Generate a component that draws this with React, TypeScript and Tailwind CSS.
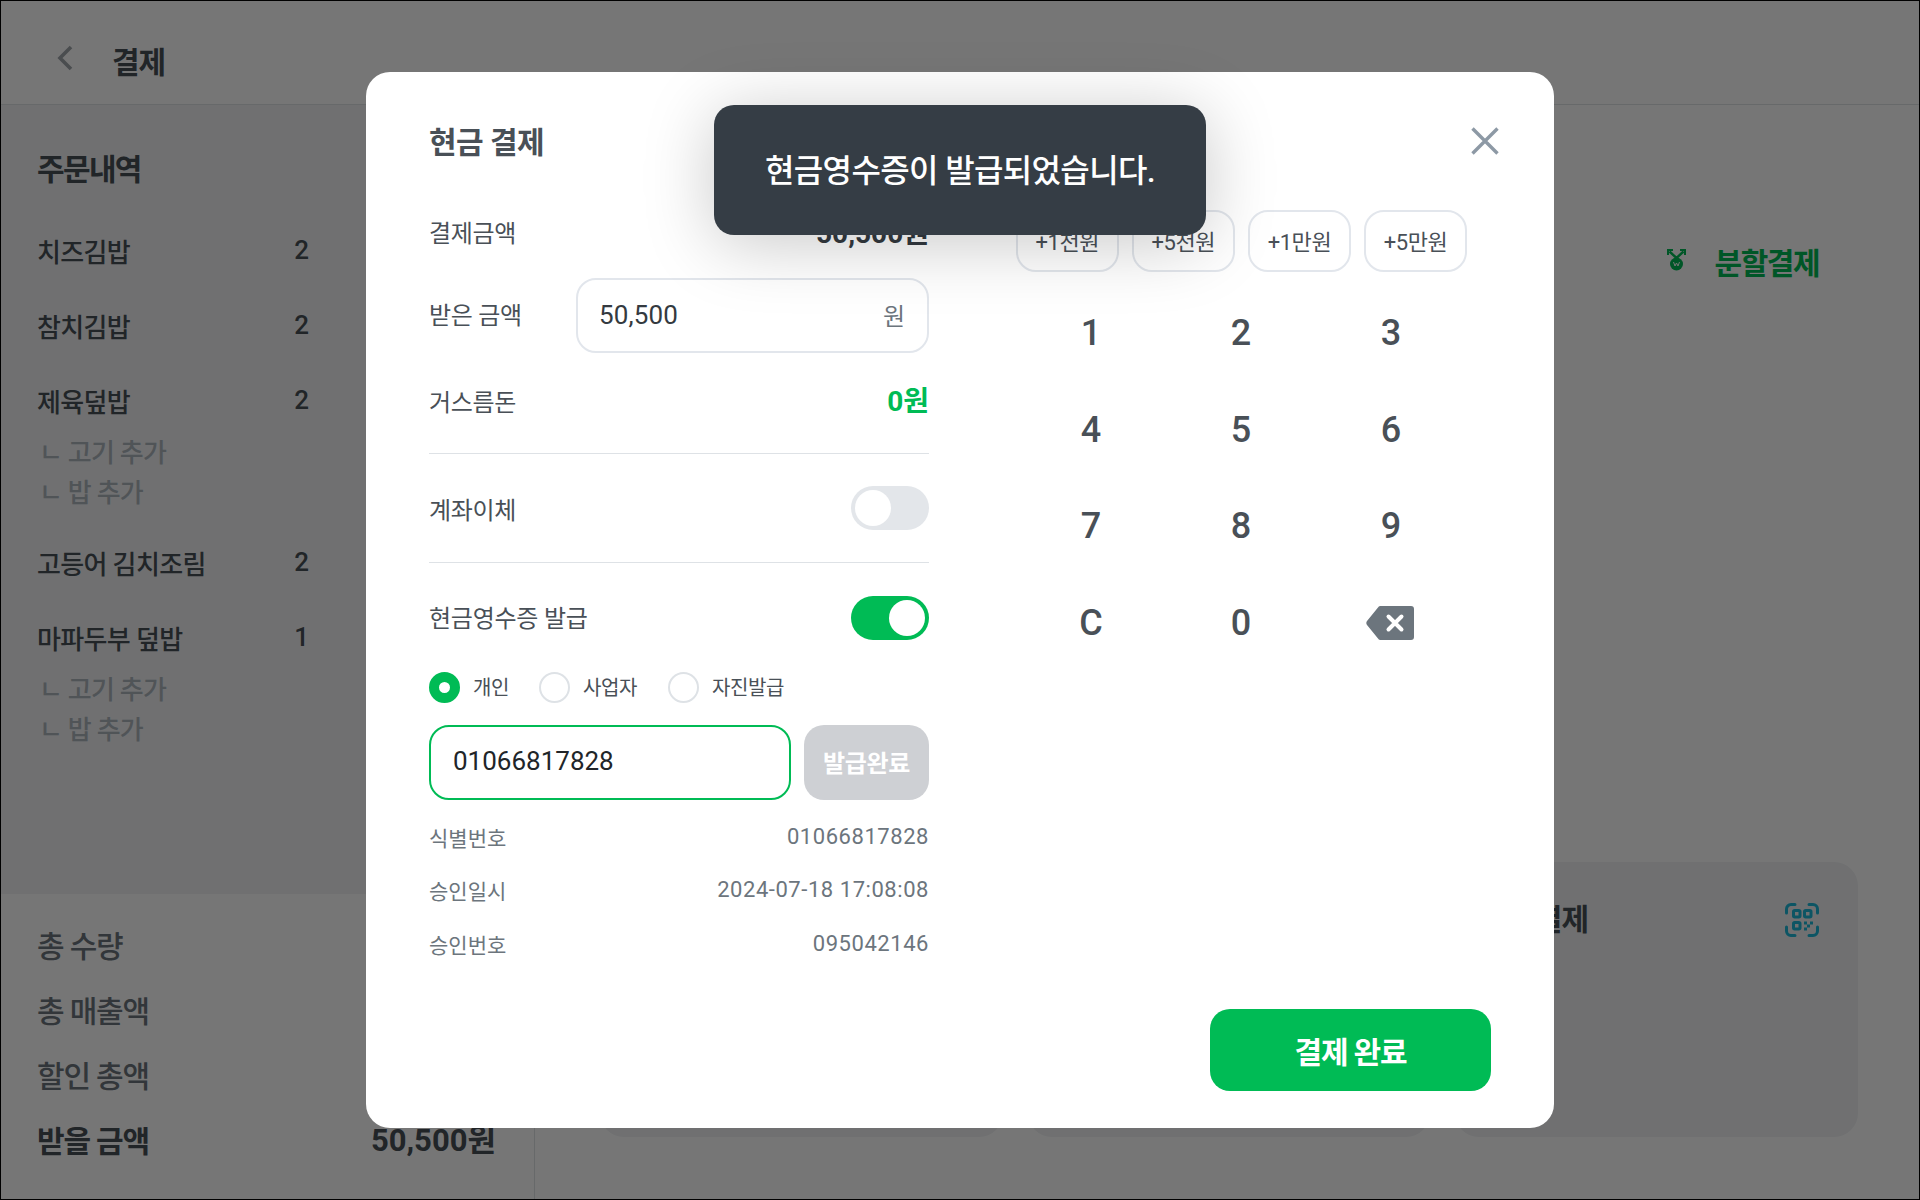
import React from "react";

const font = { fontFamily: '"Roboto","Noto Sans CJK KR",sans-serif' };

function OrderItem({ name, qty, subs, className }: { name: string; qty: number; subs?: string[]; className?: string }) {
  return (
    <div className={className}>
      <div className="flex h-[36px] w-[272px] items-center justify-between text-[26px] font-medium tracking-[-0.025em] text-[#495057]">
        <span>{name}</span>
        <span className="-mt-[5px] tracking-normal">{qty}</span>
      </div>
      {subs?.map((s, i) => (
        <div key={s} className={`${i === 0 ? "mt-[14px]" : "mt-[4px]"} h-[36px] pl-[2px] text-[26px] font-medium leading-[36px] tracking-[-0.03em] text-[#adb5bd]`}>
          {s}
        </div>
      ))}
    </div>
  );
}

function Toggle({ on }: { on?: boolean }) {
  return (
    <div className={`flex h-[44px] w-[78px] items-center rounded-full px-[4px] ${on ? "justify-end bg-[#00bb55]" : "justify-start bg-[#e3e6ea]"}`}>
      <div className="h-[36px] w-[36px] rounded-full bg-white" />
    </div>
  );
}

function Radio({ label, on, className }: { label: string; on?: boolean; className?: string }) {
  return (
    <div className={`flex items-center gap-[13px] ${className ?? ""}`}>
      {on ? (
        <div className="h-[31px] w-[31px] rounded-full border-[10px] border-[#00bb55] bg-white" />
      ) : (
        <div className="h-[31px] w-[31px] rounded-full border-2 border-[#dee2e6] bg-white" />
      )}
      <span className="text-[20px] tracking-[-0.02em] text-[#495057]">{label}</span>
    </div>
  );
}

function Info({ label, value, className }: { label: string; value: string; className?: string }) {
  return (
    <div className={`flex h-[30px] items-center justify-between text-[#6c757d] ${className ?? ""}`}>
      <span className="mt-[3px] text-[21px]">{label}</span>
      <span className="-mt-[4px] text-[22px] tracking-[0.025em]">{value}</span>
    </div>
  );
}

function Summary({ label, value, strong }: { label: string; value?: string; strong?: boolean }) {
  return (
    <div className={`flex h-[65px] items-center justify-between text-[30px] tracking-[-0.04em] ${strong ? "font-bold text-[#495057]" : "font-medium text-[#6c757d]"}`}>
      <span>{label}</span>
      {value && <span className="text-[31px] tracking-normal">{value}</span>}
    </div>
  );
}

function Qr() {
  return (
    <svg width="34" height="34" viewBox="0 0 34 34" fill="none" stroke="#1cb8d8" strokeWidth="3" className="mt-[6px]">
      <path d="M1.5 10V6a4.5 4.5 0 0 1 4.5-4.5h4M24 1.5h4A4.5 4.5 0 0 1 32.5 6v4M1.5 24v4A4.5 4.5 0 0 0 6 32.5h4M32.5 24v4a4.5 4.5 0 0 1-4.5 4.5h-4" strokeLinecap="round" />
      <rect x="8.5" y="7.5" width="6.5" height="6.5" rx="1.2" />
      <rect x="19.5" y="7.5" width="6.5" height="6.5" rx="1.2" />
      <rect x="8.5" y="19.5" width="6.5" height="6.5" rx="1.2" />
      <g fill="#1cb8d8" stroke="none">
        <rect x="19" y="18.5" width="3" height="3" />
        <rect x="25" y="18.5" width="3" height="3" />
        <rect x="22" y="21.5" width="3" height="3" />
        <rect x="19" y="24.5" width="3" height="3" />
      </g>
    </svg>
  );
}

function SplitIcon() {
  return (
    <svg width="19" height="22" viewBox="0 0 19 22" fill="none" className="-mt-[7px]">
      <path d="M2.5 2.5l7 6.5 7-6.5" stroke="#00bb55" strokeWidth="2.4" />
      <path d="M1 6V1h5M18 6V1h-5" stroke="#00bb55" strokeWidth="2" />
      <circle cx="9.5" cy="15" r="6.5" fill="#00bb55" />
      <path d="M6.5 13l1.5 4 1.5-3 1.5 3 1.5-4" stroke="#fff" strokeWidth="1" />
    </svg>
  );
}

export default function App() {
  const keys = ["1", "2", "3", "4", "5", "6", "7", "8", "9", "C", "0"];
  return (
    <div style={font} className="relative h-[1200px] w-[1920px] overflow-hidden border border-black bg-white">
      {/* page under the overlay */}
      <div className="flex h-full flex-col">
        <header className="flex h-[104px] items-center border-b border-[#dee2e6] pl-[56px] pt-[20px]">
          <svg width="16" height="26" viewBox="0 0 16 26" fill="none" stroke="#a0a6ac" strokeWidth="3.6" className="-mt-[10px]">
            <path d="M14 2L3 13l11 11" />
          </svg>
          <span className="ml-[39px] text-[30px] font-bold tracking-[-0.04em] text-[#495057]">결제</span>
        </header>
        <div className="flex flex-1">
          <aside className="flex w-[534px] flex-col border-r border-[#dee2e6]">
            <div className="h-[789px] bg-[#f1f3f5] pl-[36px] pt-[45px]">
              <div className="h-[40px] text-[30px] font-bold leading-[40px] tracking-[-0.055em] text-[#495057]">주문내역</div>
              <OrderItem name="치즈김밥" qty={2} className="mt-[45px]" />
              <OrderItem name="참치김밥" qty={2} className="mt-[39px]" />
              <OrderItem name="제육덮밥" qty={2} subs={["ㄴ 고기 추가", "ㄴ 밥 추가"]} className="mt-[39px]" />
              <OrderItem name="고등어 김치조림" qty={2} className="mt-[36px]" />
              <OrderItem name="마파두부 덮밥" qty={1} subs={["ㄴ 고기 추가", "ㄴ 밥 추가"]} className="mt-[39px]" />
            </div>
            <div className="flex flex-1 flex-col pl-[36px] pr-[38px] pt-[20px]">
              <Summary label="총 수량" />
              <Summary label="총 매출액" />
              <Summary label="할인 총액" />
              <Summary label="받을 금액" value="50,500원" strong />
            </div>
          </aside>
          <main className="flex flex-1 flex-col pb-[62px] pl-[65px] pr-[61px]">
            <div className="mt-[136px] flex items-center justify-end pr-[39px]">
              <SplitIcon />
              <span className="ml-[29px] text-[30px] font-bold tracking-[-0.05em] text-[#00bb55]">분할결제</span>
            </div>
            <div className="mt-auto grid h-[275px] grid-cols-3 gap-[25px]">
              <div className="rounded-[24px] bg-[#f1f3f5]" />
              <div className="rounded-[24px] bg-[#f1f3f5]" />
              <div className="flex items-start justify-between rounded-[24px] bg-[#f1f3f5] pl-[26px] pr-[39px] pt-[35px]">
                <span className="text-[30px] font-bold tracking-[-0.03em] text-[#495057]">간편결제</span>
                <Qr />
              </div>
            </div>
          </main>
        </div>
      </div>

      {/* dim */}
      <div className="absolute inset-0 bg-black/[0.537]" />

      {/* modal */}
      <div className="absolute left-[365px] top-[71px] flex h-[1056px] w-[1188px] rounded-[24px] bg-white pb-[37px] pl-[63px] pr-[63px] pt-[50px]">
        <div className="w-[500px]">
          <div className="mt-[2px] h-[38px] text-[30px] font-bold leading-[38px] tracking-[-0.018em] text-[#495057]">현금 결제</div>
          <div className="mt-[52px] flex h-[39px] items-center justify-between text-[24px] tracking-[-0.015em] text-[#495057]">
            <span>결제금액</span>
            <span className="text-[28px] font-bold tracking-normal text-[#343a40]">50,500원</span>
          </div>
          <div className="mt-[25px] flex h-[75px] items-center justify-between">
            <span className="mt-[1px] text-[24px] tracking-[-0.012em] text-[#495057]">받은 금액</span>
            <div className="flex h-full w-[353px] items-center justify-between rounded-[20px] border-2 border-[#e2e6ec] pl-[22px] pr-[22px]">
              <span className="-ml-[1px] text-[26px] tracking-[0.005em] text-[#343a40]">50,500</span>
              <span className="mt-[3px] text-[24px] text-[#6c757d]">원</span>
            </div>
          </div>
          <div className="mt-[29px] flex h-[40px] items-center justify-between text-[24px] tracking-[-0.015em] text-[#495057]">
            <span className="mt-[1px]">거스름돈</span>
            <span className="text-[28px] font-bold tracking-normal text-[#00bb55]">0원</span>
          </div>
          <div className="mt-[31px] h-px bg-[#dee2e6]" />
          <div className="mt-[32px] flex h-[44px] items-center justify-between">
            <span className="mt-[5px] text-[24px] tracking-[-0.015em] text-[#495057]">계좌이체</span>
            <Toggle />
          </div>
          <div className="mt-[32px] h-px bg-[#dee2e6]" />
          <div className="mt-[33px] flex h-[44px] items-center justify-between">
            <span className="mt-[1px] text-[24px] tracking-[-0.01em] text-[#495057]">현금영수증 발급</span>
            <Toggle on />
          </div>
          <div className="mt-[32px] flex h-[31px] items-center">
            <Radio label="개인" on />
            <Radio label="사업자" className="ml-[30px]" />
            <Radio label="자진발급" className="ml-[31px]" />
          </div>
          <div className="mt-[22px] flex h-[75px] gap-[13px]">
            <div className="flex w-[362px] items-center rounded-[20px] border-2 border-[#00bb55] pb-[2px] pl-[22px]">
              <span className="text-[26px] text-[#212529]">01066817828</span>
            </div>
            <div className="flex flex-1 items-center justify-center rounded-[20px] bg-[#ced0d4] pt-[3px] text-[24px] font-bold tracking-[-0.015em] text-white">발급완료</div>
          </div>
          <Info label="식별번호" value="01066817828" className="mt-[23px]" />
          <Info label="승인일시" value="2024-07-18 17:08:08" className="mt-[23px]" />
          <Info label="승인번호" value="095042146" className="mt-[24px]" />
        </div>

        <div className="ml-[87px] flex flex-1 flex-col">
          <div className="-mr-[8px] mt-[5px] flex justify-end">
            <svg width="28" height="28" viewBox="0 0 28 28" fill="none" stroke="#8d99a5" strokeWidth="3.4">
              <path d="M1.5 1.5l25 25M26.5 1.5l-25 25" />
            </svg>
          </div>
          <div className="mt-[55px] flex gap-[13.6px]">
            {["+1천원", "+5천원", "+1만원", "+5만원"].map((c) => (
              <div key={c} className="flex h-[62px] w-[102.5px] items-center justify-center rounded-[20px] border-2 border-[#e2e6ec] pt-[2px] text-[22px] tracking-[-0.02em] text-[#495057]">
                {c}
              </div>
            ))}
          </div>
          <div className="mt-[13px] grid h-[386px] w-[450px] grid-cols-3 grid-rows-4">
            {keys.map((k) => (
              <div key={k} className="flex items-center justify-center text-[36px] font-medium text-[#495057]">
                {k}
              </div>
            ))}
            <div className="flex items-center justify-center">
              <svg width="48" height="34" viewBox="0 0 48 34" fill="none" className="-ml-[2px]">
                <path d="M12 1.5a3 3 0 0 1 2-1.5h31a3 3 0 0 1 3 3v28a3 3 0 0 1-3 3H14a3 3 0 0 1-2-1.5L1 19a3.5 3.5 0 0 1 0-4z" fill="#6c757d" />
                <path d="M22.5 10.5l13 13M35.5 10.5l-13 13" stroke="#fff" strokeWidth="4" strokeLinecap="round" />
              </svg>
            </div>
          </div>
          <div className="mt-auto flex h-[82px] w-[281px] items-center justify-center self-end rounded-[20px] bg-[#00bb55] pt-[4px] text-[30px] font-bold tracking-[-0.04em] text-white">
            결제 완료
          </div>
        </div>
      </div>

      {/* toast */}
      <div className="absolute left-[713px] top-[104px] flex h-[130px] w-[492px] items-center justify-center rounded-[20px] bg-[#353d45] pt-[2px] text-[32px] font-medium tracking-[-0.02em] text-white shadow-[0_8px_70px_rgba(0,0,0,0.22)]">
        현금영수증이 발급되었습니다.
      </div>
    </div>
  );
}
